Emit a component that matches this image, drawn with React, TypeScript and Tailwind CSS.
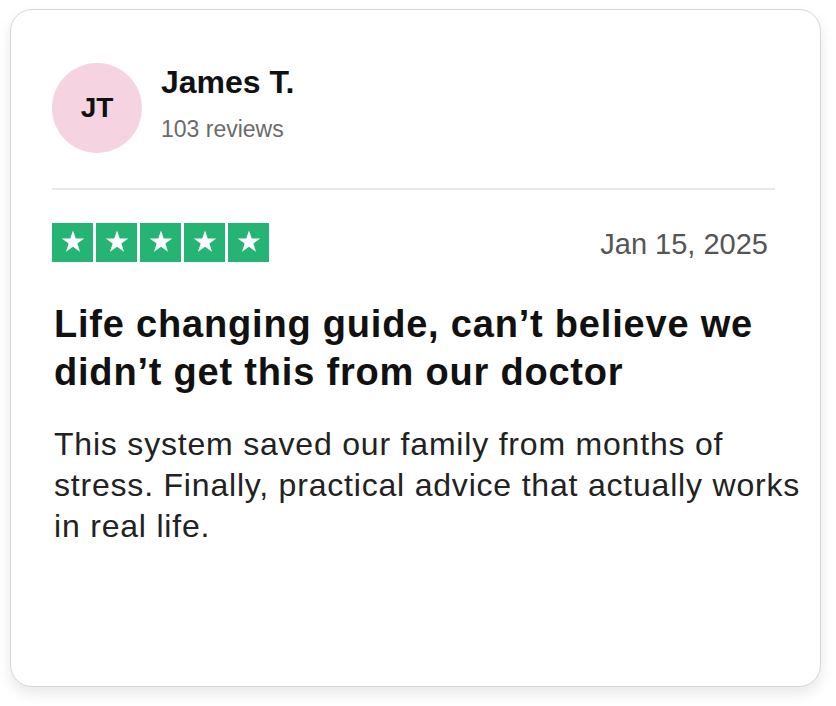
import React from "react";

function Star() {
  return (
    <div className="flex h-[39px] w-[41px] items-center justify-center bg-[#25b474]">
      <svg width="28" height="28" viewBox="0 0 24 24">
        <path
          d="M12 2.2l2.35 6.9h7.25l-5.85 4.25 2.25 6.95L12 16l-6 4.3 2.25-6.95L2.4 9.1h7.25z"
          fill="#ffffff"
        />
      </svg>
    </div>
  );
}

export default function App() {
  return (
    <div
      className="min-h-screen bg-white pl-[10px] pt-[9px]"
      style={{ fontFamily: '"Liberation Sans", Arial, Helvetica, sans-serif' }}
    >
      <div className="h-[678px] w-[811px] rounded-[22px] border border-[#d6d6d6] bg-white pl-[41px] pr-[8px] pt-[53px] shadow-[0_7px_14px_rgba(0,0,0,0.09)]">
        <div className="flex items-start">
          <div className="flex h-[90px] w-[90px] shrink-0 items-center justify-center rounded-full bg-[#f6d3e0] text-[28px] font-bold text-[#111]">
            JT
          </div>
          <div className="ml-[19px]">
            <div className="text-[32px] font-bold leading-[38px] text-[#111]">James T.</div>
            <div className="mt-[13px] text-[23px] leading-[30px] text-[#6b6b6b]">103 reviews</div>
          </div>
        </div>
        <div className="mt-[35px] h-[2px] w-[723px] bg-[#e8e8e8]" />
        <div className="mt-[32px] flex w-[716px] items-center justify-between">
          <div className="flex gap-[3px]">
            <Star />
            <Star />
            <Star />
            <Star />
            <Star />
          </div>
          <div className="pt-[4px] text-[29px] leading-[36px] text-[#555]">Jan 15, 2025</div>
        </div>
        <h1 className="ml-[2px] mt-[38px] w-[752px] text-[38px] font-bold leading-[48px] tracking-[0.8px] text-[#111]">
          Life changing guide, can’t believe we didn’t get this from our doctor
        </h1>
        <p className="ml-[2px] mt-[28px] w-[760px] text-[32px] leading-[41px] tracking-[0.8px] text-[#222]">
          This system saved our family from months of stress. Finally, practical advice that actually works in real life.
        </p>
      </div>
    </div>
  );
}
